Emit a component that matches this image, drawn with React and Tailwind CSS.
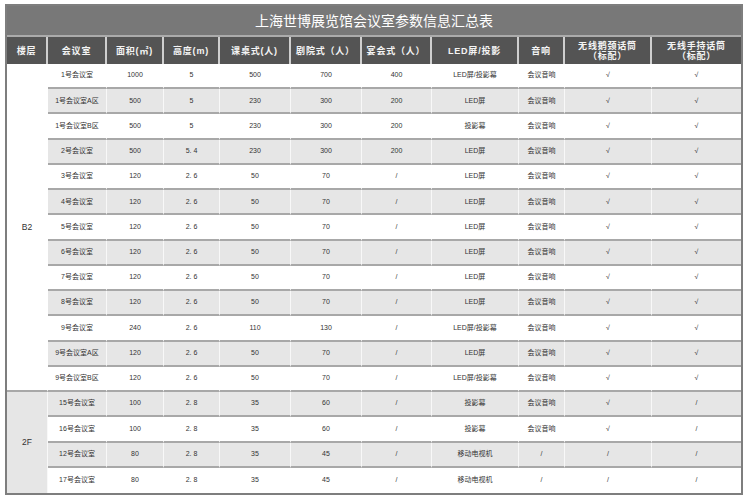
import React from "react";

const headers = [
  ["楼层"],
  ["会议室"],
  ["面积(㎡)"],
  ["高度(m)"],
  ["课桌式(人)"],
  ["剧院式（人）"],
  ["宴会式（人）"],
  ["LED屏/投影"],
  ["音响"],
  ["无线鹅颈话筒", "（标配）"],
  ["无线手持话筒", "（标配）"],
];

const std = ["120", "2. 6", "50", "70", "/", "LED屏", "会议音响", "√", "√"];

const floors = [
  {
    name: "B2",
    bg: "bg-white",
    rows: [
      ["1号会议室", "1000", "5", "500", "700", "400", "LED屏/投影幕", "会议音响", "√", "√"],
      ["1号会议室A区", "500", "5", "230", "300", "200", "LED屏", "会议音响", "√", "√"],
      ["1号会议室B区", "500", "5", "230", "300", "200", "投影幕", "会议音响", "√", "√"],
      ["2号会议室", "500", "5. 4", "230", "300", "200", "LED屏", "会议音响", "√", "√"],
      ["3号会议室", ...std],
      ["4号会议室", ...std],
      ["5号会议室", ...std],
      ["6号会议室", ...std],
      ["7号会议室", ...std],
      ["8号会议室", ...std],
      ["9号会议室", "240", "2. 6", "110", "130", "/", "LED屏/投影幕", "会议音响", "√", "√"],
      ["9号会议室A区", ...std],
      ["9号会议室B区", "120", "2. 6", "50", "70", "/", "LED屏/投影幕", "会议音响", "√", "√"],
    ],
  },
  {
    name: "2F",
    bg: "bg-[#e6e6e6]",
    rows: [
      ["15号会议室", "100", "2. 8", "35", "60", "/", "投影幕", "会议音响", "√", "/"],
      ["16号会议室", "100", "2. 8", "35", "60", "/", "投影幕", "会议音响", "√", "/"],
      ["12号会议室", "80", "2. 8", "35", "45", "/", "移动电视机", "/", "/", "/"],
      ["17号会议室", "80", "2. 8", "35", "45", "/", "移动电视机", "/", "/", "/"],
    ],
  },
];

const cols = "grid-cols-[41px_59px_57px_56px_71px_71px_70px_87px_46px_87px_89px]";

export default function App() {
  let rowIdx = 0;
  const total = floors.reduce((n, f) => n + f.rows.length, 0);

  return (
    <div className="w-[745px] h-[500px] bg-white pt-[4px] pl-[5px] font-['Liberation_Sans','Noto_Sans_CJK_SC',sans-serif]">
      <div className="w-[738px] h-[491px] border-2 border-[#7e7e7e] flex flex-col">
        {/* Title */}
        <div className="h-[31px] shrink-0 bg-[#787878] border-b-2 border-[#ababab] flex items-center justify-center text-white text-[14px] pt-[1px]">
          上海世博展览馆会议室参数信息汇总表
        </div>

        {/* Header row */}
        <div className={`grid ${cols} h-[27px] shrink-0 bg-[#545454]`}>
          {headers.map((h, i) => (
            <div
              key={i}
              className={`flex flex-col items-center justify-center text-[#f4f4f4] font-bold text-[9px] leading-[10px] tracking-[0.8px] ${
                i < headers.length - 1 ? "border-r-2 border-[#cfcfcf]" : ""
              }`}
            >
              {h.map((line) => (
                <span key={line}>{line}</span>
              ))}
            </div>
          ))}
        </div>

        {/* Body */}
        <div className={`grid ${cols} grid-rows-[repeat(17,minmax(0,1fr))] flex-1 text-[#333]`}>
          {floors.map((floor, fi) => {
            const start = rowIdx + 1;
            rowIdx += floor.rows.length;
            return (
              <React.Fragment key={floor.name}>
                <div
                  className={`col-start-1 flex items-center justify-center text-[8.5px] border-r border-white/70 ${floor.bg} ${
                    fi < floors.length - 1 ? "border-b-2 border-b-[#a8a8a8]" : ""
                  }`}
                  style={{ gridRow: `${start} / span ${floor.rows.length}` }}
                >
                  {floor.name}
                </div>
                {floor.rows.map((row, ri) => {
                  const r = start + ri;
                  const grey = r % 2 === 0;
                  return row.map((cell, ci) => (
                    <div
                      key={`${r}-${ci}`}
                      className={`flex items-center justify-center text-[7px] whitespace-pre ${
                        grey ? "bg-[#e6e6e6]" : "bg-white"
                      } ${ci < row.length - 1 ? "border-r border-white/70" : ""} ${
                        r < total ? "border-b-2 border-b-[#a8a8a8]" : ""
                      }`}
                      style={{ gridRow: r, gridColumn: ci + 2 }}
                    >
                      {cell}
                    </div>
                  ));
                })}
              </React.Fragment>
            );
          })}
        </div>
      </div>
    </div>
  );
}
